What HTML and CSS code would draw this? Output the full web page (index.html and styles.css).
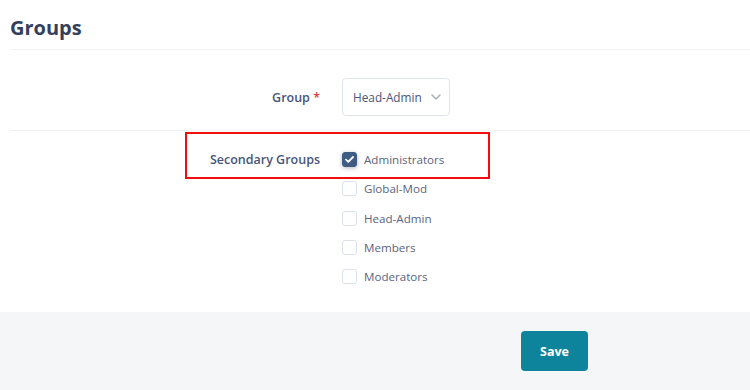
FILE: index.html
```html
<!DOCTYPE html>
<html lang="en">
<head>
    <meta charset="UTF-8">
    <meta name="viewport" content="width=device-width, initial-scale=1.0">
    <title>Groups</title>
    <link rel="stylesheet" href="styles.css">
</head>
<body>
    <div class="block-header">
        <h2>Groups</h2>
    </div>

    <div class="form-row row-group">
        <label class="row-label">Group <span class="req">*</span></label>
        <div class="row-control">
            <div class="select">
                <span>Head-Admin</span>
                <svg class="chev" width="10" height="6" viewBox="0 0 10 6">
                    <path d="M1 1l4 4 4-4" fill="none" stroke="#a9afbd" stroke-width="1.6" stroke-linecap="round" stroke-linejoin="round"/>
                </svg>
            </div>
        </div>
    </div>

    <div class="form-row row-secondary">
        <div class="highlight"></div>
        <label class="row-label">Secondary Groups</label>
        <ul class="check-list">
            <li><span class="box checked"><svg width="9" height="7" viewBox="0 0 9 7"><path d="M1 3.6l2.3 2.2L8 1" fill="none" stroke="#fff" stroke-width="1.8" stroke-linecap="round" stroke-linejoin="round"/></svg></span>Administrators</li>
            <li><span class="box"></span>Global-Mod</li>
            <li><span class="box"></span>Head-Admin</li>
            <li><span class="box"></span>Members</li>
            <li><span class="box"></span>Moderators</li>
        </ul>
    </div>

    <div class="form-footer">
        <button class="btn-save">Save</button>
    </div>
</body>
</html>
```

FILE: styles.css
```css
body {
    margin: 0;
    font-family: 'Open Sans', 'Noto Sans', sans-serif;
    background-color: #fff;
    color: #4a5578;
}
.block-header {
    margin-left: 10px;
    height: 50px;
    border-bottom: 1px solid #f0f1f4;
    box-sizing: border-box;
}
h2 {
    margin: 0;
    padding-top: 14px;
    font-size: 20px;
    font-weight: 700;
    color: #343f5e;
}
.form-row {
    display: grid;
    grid-template-columns: 320px 1fr;
    column-gap: 22px;
}
.row-group {
    margin-left: 10px;
    grid-template-columns: 310px 1fr;
    padding: 28px 0 14px;
    border-bottom: 1px solid #f0f1f4;
    align-items: center;
}
.row-label {
    text-align: right;
    font-size: 12.5px;
    font-weight: 600;
    color: #4a5578;
}
.req {
    color: #e03c3c;
}
.select {
    width: 108px;
    height: 38px;
    box-sizing: border-box;
    border: 1px solid #dfe3eb;
    border-radius: 4px;
    display: flex;
    align-items: center;
    justify-content: space-between;
    padding: 0 8px 0 10px;
    font-size: 11.8px;
    color: #4a5578;
}
.row-secondary {
    position: relative;
    padding-top: 21px;
    height: 181px;
    box-sizing: border-box;
}
.row-secondary .row-label {
    line-height: 15px;
}
.highlight {
    position: absolute;
    left: 185px;
    top: 1px;
    width: 305px;
    height: 47px;
    box-sizing: border-box;
    border: 2px solid #f20d0d;
}
.check-list {
    list-style: none;
    margin: 0;
    padding: 0;
}
.check-list li {
    display: flex;
    align-items: center;
    height: 15px;
    margin-bottom: 14.3px;
    font-size: 11.6px;
    color: #5a6482;
}
.box {
    width: 15px;
    height: 15px;
    box-sizing: border-box;
    border: 1px solid #dde1ea;
    border-radius: 3px;
    margin-right: 7px;
    display: flex;
    align-items: center;
    justify-content: center;
}
.box.checked {
    background-color: #3e5b82;
    border-color: #3e5b82;
    box-shadow: 0 1px 4px rgba(30, 45, 80, 0.35);
}
.form-footer {
    background-color: #f5f6f8;
    height: 78px;
    padding: 19px 0 0 521px;
    box-sizing: border-box;
}
.btn-save {
    width: 67px;
    height: 40px;
    border: none;
    border-radius: 4px;
    background-color: #0d849c;
    color: #fff;
    font-family: 'Open Sans', sans-serif;
    font-weight: 700;
    font-size: 12.5px;
    cursor: pointer;
}
```
